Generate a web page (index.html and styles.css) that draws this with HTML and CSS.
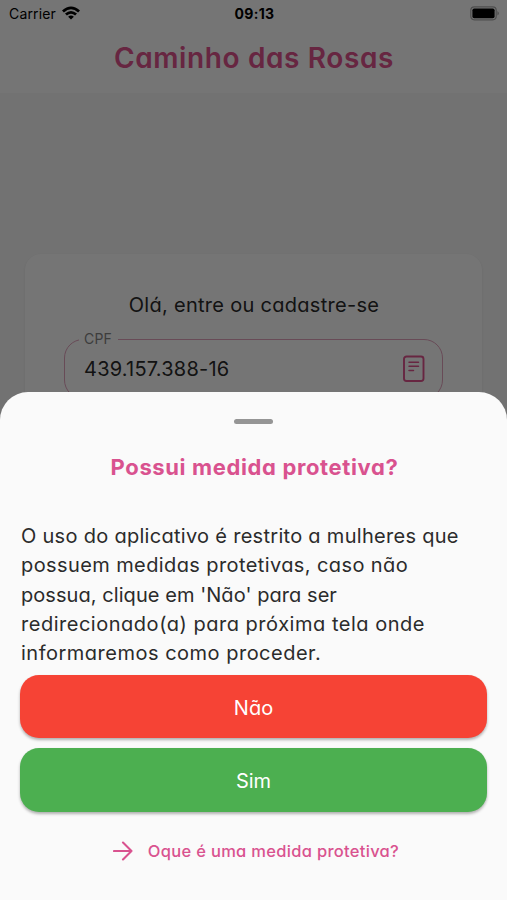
FILE: index.html
```html
<!DOCTYPE html>
<html lang="pt-BR">
<head>
<meta charset="utf-8">
<meta name="viewport" content="width=device-width, initial-scale=1">
<title>Caminho das Rosas</title>
<link rel="stylesheet" href="styles.css">
</head>
<body>
<div class="screen">
  <div class="page">
    <header class="header">
      <div class="status">
        <div class="carrier"><span>Carrier</span>
          <svg width="18" height="14" viewBox="0 0 18 14"><path d="M0 4.4Q9-3.6 18 4.4L16.1 6.4Q9 .3 1.9 6.4Z"/><path d="M3 7.6Q9 2.2 15 7.6L13.1 9.5Q9 6 4.9 9.5Z"/><path d="M6.1 10.7Q9 8.1 11.9 10.7L9 13.6Z"/></svg>
        </div>
        <time class="clock">09:13</time>
        <svg class="battery" width="30" height="15" viewBox="0 0 30 15"><rect x=".8" y=".8" width="25.4" height="13" rx="3.5" fill="none" stroke="#aaa" stroke-width="1.2"/><rect x="2.4" y="2.4" width="22.2" height="9.8" rx="1.8"/><path d="M27.5 5Q30 7.3 27.5 9.6Z" fill="#999"/></svg>
      </div>
      <h1 class="title">Caminho das Rosas</h1>
    </header>
    <section class="card">
      <p class="welcome">Olá, entre ou cadastre-se</p>
      <div class="field">
        <label class="label">CPF</label>
        <span class="value">439.157.388-16</span>
        <svg class="doc" width="24" height="28" viewBox="0 0 24 28"><rect x="2" y="1.500" width="19.500" height="24.500" rx="2.500" stroke-width="1.900"/><path d="M7 7.200h9.500M7 11.300h9.500M7 15.400h4.500" stroke-width="1.500"/></svg>
      </div>
    </section>
  </div>
  <div class="scrim"></div>
  <section class="sheet">
    <div class="handle"></div>
    <h2 class="question">Possui medida protetiva?</h2>
    <p class="text">
      <span class="l1">O uso do aplicativo é restrito a mulheres que</span>
      <span class="l2">possuem medidas protetivas, caso não</span>
      <span class="l3">possua, clique em 'Não' para ser</span>
      <span class="l4">redirecionado(a) para próxima tela onde</span>
      <span class="l5">informaremos como proceder.</span>
    </p>
    <button class="btn no">Não</button>
    <button class="btn yes">Sim</button>
    <a class="more">
      <svg width="20" height="20" viewBox="0 0 20 20"><path d="M1 10h17.500M10 1.600L18.500 10l-8.500 8.400"/></svg>
      <span>Oque é uma medida protetiva?</span>
    </a>
  </section>
</div>
</body>
</html>
```
FILE: styles.css
```css
* { box-sizing: border-box; }
body { margin: 0; font-family: Inter, "Liberation Sans", sans-serif; font-feature-settings: "cv11" 1; color: #2b2b2b; }
h1, h2, p { margin: 0; }
.screen { position: relative; width: 507px; height: 900px; overflow: hidden; display: flex; flex-direction: column; justify-content: flex-end; }
.page { position: absolute; inset: 0; background: #f8f8f8; }
.scrim { position: absolute; inset: 0; background: rgba(0, 0, 0, .54); }
.header { height: 93px; background: #fff; color: #000; }
.status { height: 27px; padding: 0 7px 0 9px; display: grid; grid-template-columns: 1fr auto 1fr; align-items: center; font-size: 14px; font-feature-settings: normal; }
.carrier { display: flex; align-items: center; gap: 6px; letter-spacing: .15px; }
.carrier svg { margin-top: -1px; }
.clock { font-weight: 700; letter-spacing: .3px; }
.battery { justify-self: end; margin-top: -1px; }
.title { padding-left: 1px; text-align: center; font-size: 28px; font-weight: 600; line-height: 34px; margin-top: 14px; color: #e0538f; letter-spacing: .62px; white-space: nowrap; }
.card { width: 457px; height: 300px; margin: 161px auto 0; padding: 36px 39px; background: #fff; border-radius: 16px; box-shadow: 0 1px 2px rgba(0, 0, 0, .1); }
.welcome { padding-left: 1px; text-align: center; font-size: 20px; line-height: 30px; letter-spacing: .29px; white-space: nowrap; }
.field { position: relative; display: flex; align-items: center; justify-content: space-between; height: 60px; margin-top: 19px; padding: 0 16px 0 19px; border: 1px solid #e3a3be; border-radius: 19px; }
.label { position: absolute; left: 14px; top: -10px; padding: 0 6px 0 5px; background: #fff; color: #868686; font-size: 14px; line-height: 18px; letter-spacing: .2px; }
.value { font-size: 20px; letter-spacing: .22px; }
.doc { fill: none; stroke: #e0538f; stroke-linecap: round; }
.sheet { position: relative; height: 508px; padding: 27px 20px 0; background: #fafafa; border-radius: 28px 28px 0 0; display: flex; flex-direction: column; align-items: center; }
.handle { width: 39px; height: 5px; border-radius: 3px; background: #959595; flex: none; }
.question { padding-left: 2px; margin-top: 27px; font-size: 22px; line-height: 32px; font-weight: 700; letter-spacing: .63px; color: #d9528f; white-space: nowrap; }
.text { align-self: stretch; margin-top: 39px; padding-left: 1px; font-size: 20px; line-height: 29.3px; }
.text span { display: block; width: max-content; white-space: nowrap; }
.l1 { letter-spacing: .29px; }
.l2 { letter-spacing: .4px; }
.l3 { letter-spacing: .06px; }
.l4 { letter-spacing: .52px; }
.l5 { letter-spacing: .5px; }
.btn { width: 467px; height: 63.500px; flex: none; border: 0; border-radius: 19px; color: #fff; font: inherit; font-size: 20px; font-feature-settings: inherit; padding: 2px 0 0; box-shadow: 0 2px 3px rgba(0, 0, 0, .3); }
.no { margin-top: 6.500px; background: #f64335; }
.yes { margin-top: 10px; background: #4caf50; }
.more { margin-top: 26px; padding-left: 5px; display: flex; align-items: center; gap: 15px; font-size: 16.500px; line-height: 26px; font-weight: 500; letter-spacing: .3px; color: #d9528f; white-space: nowrap; }
.more svg { fill: none; stroke: #d9528f; stroke-width: 2.1; stroke-linecap: round; stroke-linejoin: round; }
```
